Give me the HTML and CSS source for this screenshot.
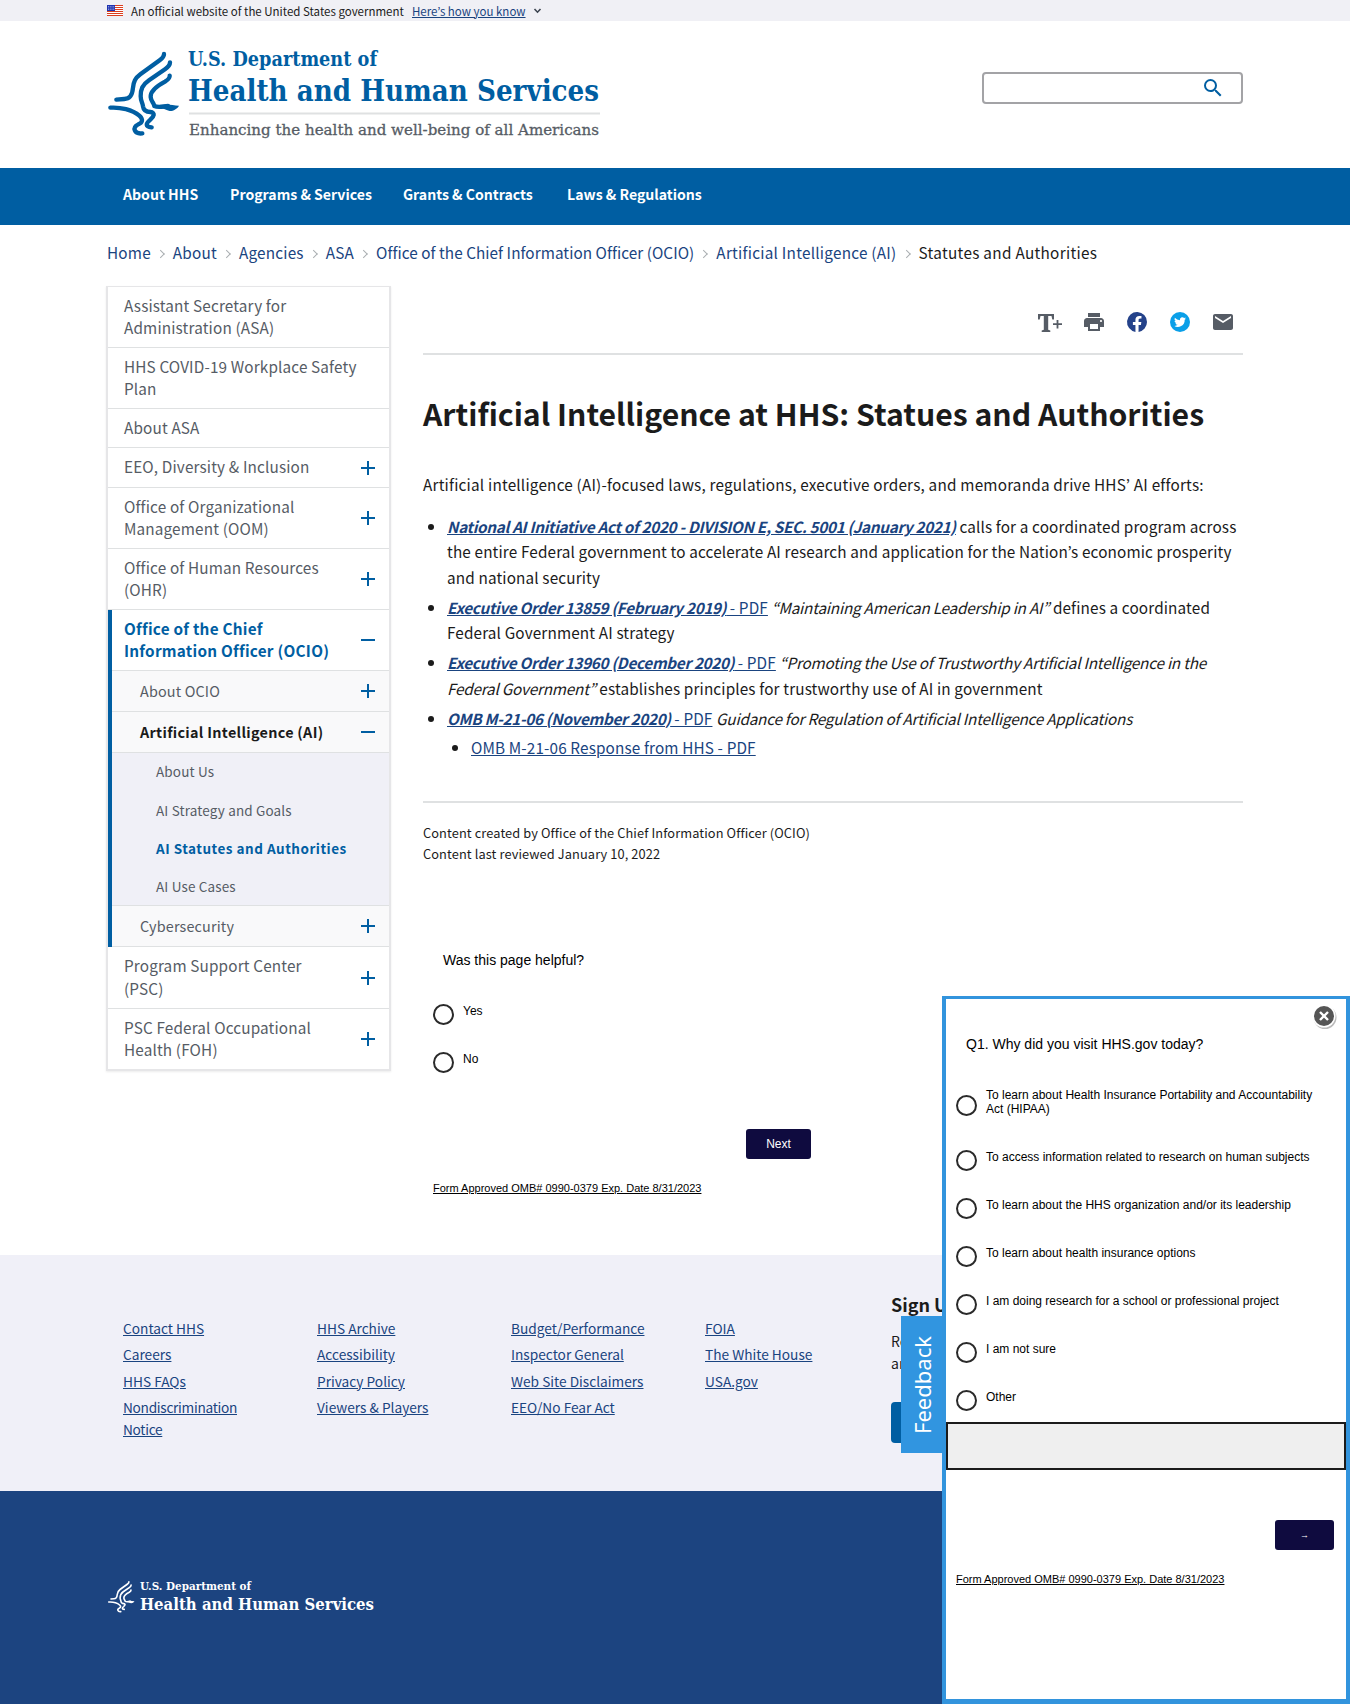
FILE: index.html
```html
<!DOCTYPE html>
<html lang="en">
<head>
<meta charset="utf-8">
<title>Artificial Intelligence at HHS: Statues and Authorities</title>
<link rel="stylesheet" href="styles.css">
</head>
<body>
<svg class="defs" width="0" height="0" aria-hidden="true">
  <symbol id="eagle" viewBox="20 10 216 264">
    <g fill="none" stroke="currentColor" stroke-width="13" stroke-linecap="round" stroke-linejoin="round">
      <path d="M191 25C191 32 186 38 178 44L120 86C104 98 100 108 98 126C96 150 88 160 72 160L48 162"/>
      <path d="M209 50C209 58 204 64 194 71L146 104C126 118 121 130 121 152C121 166 127 172 128 182C130 196 138 199 150 199C166 201 161 212 150 222C136 234 134 243 154 245"/>
      <path d="M208 90C209 97 204 102 194 108C164 124 150 138 151 154C152 168 160 170 162 181C176 188 190 181 203 181"/>
      <path d="M30 186C60 184 96 192 117 210C130 222 126 231 114 236C94 246 102 266 126 263"/>
    </g>
    <path fill="currentColor" d="M184 179C200 173 214 178 236 180C230 190 218 197 208 196C198 194 192 190 184 188Z"/>
  </symbol>
  <symbol id="plus" viewBox="0 0 14 14"><path d="M0 7H14M7 0V14" stroke="#005ea2" stroke-width="2"/></symbol>
  <symbol id="minus" viewBox="0 0 14 14"><path d="M0 7H14" stroke="#005ea2" stroke-width="2"/></symbol>
</svg>

<div class="banner">
  <svg class="flag" viewBox="0 0 16 11"><rect width="16" height="11" fill="#fff"/><path d="M0 .5H16M0 2.5H16M0 4.5H16M0 6.5H16M0 8.5H16M0 10.5H16" stroke="#db3e1f"/><rect width="8" height="6" fill="#1e33b1"/><path d="M1 1.5H8M1 3H8M1 4.5H8" stroke="#fff" stroke-width=".6" stroke-dasharray=".8 1"/></svg>
  <span class="banner-text">An official website of the United States government</span>
  <a class="banner-link" href="#">Here’s how you know</a>
  <svg class="chev" viewBox="0 0 8 6"><path d="M1 1L4 4.2L7 1" fill="none" stroke="#3d4551" stroke-width="1.6"/></svg>
</div>

<header class="header">
  <svg class="logo" viewBox="0 0 494 94">
    <use href="#eagle" x="0" y="4" width="72" height="88" color="#005ea2"/>
    <g class="logo-serif" fill="#005ea2">
      <text x="81" y="20.7" font-size="19.5" textLength="189" lengthAdjust="spacingAndGlyphs">U.S. Department of</text>
      <text x="81" y="56.3" font-size="30" textLength="411" lengthAdjust="spacingAndGlyphs">Health and Human Services</text>
    </g>
    <path d="M82 68.5H493" stroke="#dfe1e2" stroke-width="2"/>
    <text class="logo-tag" x="82" y="90" font-size="15.3" textLength="410" lengthAdjust="spacingAndGlyphs" fill="#565c65">Enhancing the health and well-being of all Americans</text>
  </svg>
  <div class="search">
    <svg viewBox="0 0 24 24" width="24" height="24"><path fill="#005ea2" d="M15.5 14h-.79l-.28-.27A6.47 6.47 0 0 0 16 9.5 6.5 6.5 0 1 0 9.5 16c1.61 0 3.09-.59 4.23-1.57l.27.28v.79l5 4.99L20.49 19l-4.99-5zm-6 0a4.5 4.5 0 1 1 0-9 4.5 4.5 0 0 1 0 9z"/></svg>
  </div>
</header>

<nav class="nav">
  <a class="n1">About HHS</a><a class="n2">Programs &amp; Services</a><a class="n3">Grants &amp; Contracts</a><a class="n4">Laws &amp; Regulations</a>
</nav>

<div class="crumbs">
  <a>Home</a><i></i><a>About</a><i></i><a>Agencies</a><i></i><a>ASA</a><i></i><a class="tight">Office of the Chief Information Officer (OCIO)</a><i></i><a class="loose">Artificial Intelligence (AI)</a><i></i><span>Statutes and Authorities</span>
</div>

<div class="page">
  <aside class="side">
    <div class="item">Assistant Secretary for<br>Administration (ASA)</div>
    <div class="item">HHS COVID-19 Workplace Safety<br>Plan</div>
    <div class="item">About ASA</div>
    <div class="item">EEO, Diversity &amp; Inclusion<svg><use href="#plus"/></svg></div>
    <div class="item">Office of Organizational<br>Management (OOM)<svg><use href="#plus"/></svg></div>
    <div class="item">Office of Human Resources<br>(OHR)<svg><use href="#plus"/></svg></div>
    <div class="group">
      <div class="item current">Office of the Chief<br>Information Officer (OCIO)<svg><use href="#minus"/></svg></div>
      <div class="item sub">About OCIO<svg><use href="#plus"/></svg></div>
      <div class="item sub open">Artificial Intelligence (AI)<svg><use href="#minus"/></svg></div>
      <div class="leafs">
        <div>About Us</div>
        <div>AI Strategy and Goals</div>
        <div class="active">AI Statutes and Authorities</div>
        <div>AI Use Cases</div>
      </div>
      <div class="item sub">Cybersecurity<svg><use href="#plus"/></svg></div>
    </div>
    <div class="item">Program Support Center<br>(PSC)<svg><use href="#plus"/></svg></div>
    <div class="item">PSC Federal Occupational<br>Health (FOH)<svg><use href="#plus"/></svg></div>
  </aside>

  <main class="main">
    <div class="share">
      <svg viewBox="0 0 26 24" class="tplus"><path fill="#565c65" d="M1 4H17V9.500H15.300L14.500 6H11.200V19.800L13.300 20.500V22H4.700V20.500L6.800 19.800V6H3.500L2.700 9.500H1ZM19.600 10H21.400V13.300H25V15H21.400V18.500H19.600V15H16V13.300H19.600Z"/></svg>
      <svg viewBox="0 0 24 24"><path fill="#565c65" d="M19 8H5c-1.660 0-3 1.340-3 3v6h4v4h12v-4h4v-6c0-1.660-1.340-3-3-3zm-3 11H8v-5h8v5zm3-7c-.55 0-1-.45-1-1s.45-1 1-1 1 .45 1 1-.45 1-1 1zm-1-9H6v4h12V3z"/></svg>
      <svg viewBox="0 0 24 24"><path fill="#24428a" d="M22 12a10 10 0 1 0-11.560 9.880v-6.990H7.900V12h2.540V9.800c0-2.510 1.490-3.890 3.780-3.890 1.090 0 2.240.2 2.240.2v2.460h-1.260c-1.240 0-1.630.77-1.630 1.560V12h2.780l-.45 2.890h-2.330v6.990A10 10 0 0 0 22 12z"/></svg>
      <svg viewBox="0 0 24 24"><circle cx="12" cy="12" r="10" fill="#0a9fe8"/><path fill="#fff" d="M18 8.400c-.45.200-.9.330-1.400.390.500-.3.900-.78 1.070-1.350-.48.280-1 .480-1.550.600a2.450 2.450 0 0 0-4.200 2.230 6.950 6.950 0 0 1-5.040-2.560 2.450 2.450 0 0 0 .76 3.270c-.4 0-.78-.12-1.110-.3v.03c0 1.190.84 2.180 1.960 2.400-.36.100-.74.120-1.100.040a2.450 2.450 0 0 0 2.280 1.700A4.900 4.900 0 0 1 6 15.870a6.930 6.930 0 0 0 10.680-6.170A4.900 4.900 0 0 0 18 8.400z"/></svg>
      <svg viewBox="0 0 24 24"><path fill="#565c65" d="M20 4H4c-1.100 0-2 .9-2 2v12c0 1.100.9 2 2 2h16c1.100 0 2-.9 2-2V6c0-1.100-.9-2-2-2zm0 4l-8 5-8-5V6l8 5 8-5v2z"/></svg>
    </div>
    <h1>Artificial Intelligence at HHS: Statues and Authorities</h1>
    <p class="intro">Artificial intelligence (AI)-focused laws, regulations, executive orders, and memoranda drive HHS’ AI efforts:</p>
    <ul class="list">
      <li><a><b>National AI Initiative Act of 2020 - DIVISION E, SEC. 5001 (January 2021)</b></a> calls for a coordinated program across<br>the entire Federal government to accelerate AI research and application for the Nation’s economic prosperity<br>and national security</li>
      <li><a><b>Executive Order 13859 (February 2019)</b> - PDF</a> <em>“Maintaining American Leadership in AI”</em> defines a coordinated<br>Federal Government AI strategy</li>
      <li><a><b>Executive Order 13960 (December 2020)</b> - PDF</a> <em>“Promoting the Use of Trustworthy Artificial Intelligence in the<br>Federal Government”</em> establishes principles for trustworthy use of AI in government</li>
      <li><a><b>OMB M-21-06 (November 2020)</b> - PDF</a> <em>Guidance for Regulation of Artificial Intelligence Applications</em>
        <ul><li><a>OMB M-21-06 Response from HHS - PDF</a></li></ul>
      </li>
    </ul>
    <div class="meta">Content created by Office of the Chief Information Officer (OCIO)<br>Content last reviewed January 10, 2022</div>
    <form class="survey">
      <p class="q">Was this page helpful?</p>
      <label class="opt"><span class="radio"></span>Yes</label>
      <label class="opt"><span class="radio"></span>No</label>
      <button class="btn next" type="button">Next</button>
      <a class="omb">Form Approved OMB# 0990-0379 Exp. Date 8/31/2023</a>
    </form>
  </main>
</div>

<footer>
  <div class="links">
    <div class="col"><a>Contact HHS</a><a>Careers</a><a>HHS FAQs</a><a class="snug">Nondiscrimination<br>Notice</a></div>
    <div class="col"><a>HHS Archive</a><a>Accessibility</a><a>Privacy Policy</a><a>Viewers &amp; Players</a></div>
    <div class="col"><a>Budget/Performance</a><a>Inspector General</a><a>Web Site Disclaimers</a><a>EEO/No Fear Act</a></div>
    <div class="col"><a>FOIA</a><a>The White House</a><a>USA.gov</a></div>
    <div class="signup"><h2>Sign Up</h2><p>Receive<br>and</p><span class="signbtn"></span></div>
  </div>
  <div class="bottom">
    <svg class="flogo" viewBox="0 0 270 36" color="#fff">
      <use href="#eagle" x="0" y="2" width="28" height="33"/>
      <g class="logo-serif" fill="#fff">
        <text x="33" y="11.700" font-size="11.2" textLength="111" lengthAdjust="spacingAndGlyphs">U.S. Department of</text>
        <text x="33" y="32.300" font-size="16.800" textLength="234" lengthAdjust="spacingAndGlyphs">Health and Human Services</text>
      </g>
    </svg>
  </div>
</footer>

<div class="tab"><span>Feedback</span></div>
<div class="modal">
  <svg class="close" viewBox="0 0 26 26"><circle cx="14" cy="14.500" r="11.500" fill="#bbb"/><circle cx="13" cy="13" r="11.500" fill="#fff"/><circle cx="13" cy="13" r="10" fill="#555"/><path d="M9 9L17 17M17 9L9 17" stroke="#fff" stroke-width="2.400"/></svg>
  <p class="q">Q1. Why did you visit HHS.gov today?</p>
  <label class="opt tall"><span class="radio"></span>To learn about Health Insurance Portability and Accountability<br>Act (HIPAA)</label>
  <label class="opt"><span class="radio"></span>To access information related to research on human subjects</label>
  <label class="opt"><span class="radio"></span>To learn about the HHS organization and/or its leadership</label>
  <label class="opt"><span class="radio"></span>To learn about health insurance options</label>
  <label class="opt"><span class="radio"></span>I am doing research for a school or professional project</label>
  <label class="opt"><span class="radio"></span>I am not sure</label>
  <label class="opt last"><span class="radio"></span>Other</label>
  <div class="other"></div>
  <button class="btn arrow" type="button">→</button>
  <a class="omb">Form Approved OMB# 0990-0379 Exp. Date 8/31/2023</a>
</div>
</body>
</html>
```
FILE: styles.css
```css
* { box-sizing: border-box; }
body {
  margin: 0;
  width: 1350px;
  height: 1704px;
  position: relative;
  overflow: hidden;
  background: #fff;
  color: #1b1b1b;
  font-family: "Noto Sans CJK KR", sans-serif;
  font-size: 15.3px;
  white-space: nowrap;
}
.defs { position: absolute; }
p, h1, h2, ul { margin: 0; padding: 0; }

.banner {
  height: 21px;
  background: #f0f0f5;
  padding-left: 107px;
  display: flex;
  align-items: center;
  font-size: 11.5px;
  line-height: 22px;
}
.flag { width: 16px; height: 11px; margin-right: 8px; }
.banner-text { width: 281px; }
.banner-link { color: #1a4480; text-decoration: underline; margin-right: 5px; width: 116px; }
.chev { width: 9px; height: 6px; }

.header { height: 147px; padding: 24px 107px 0; display: flex; justify-content: space-between; }
.logo { width: 494px; height: 94px; overflow: visible; }
.logo-serif { font-family: "DejaVu Serif", serif; font-weight: bold; }
.logo-tag { font-family: "DejaVu Serif", serif; stroke: #565c65; stroke-width: .3px; }
.search {
  width: 261px;
  height: 32px;
  margin-top: 27px;
  border: 2px solid #a3a3a6;
  border-radius: 4px;
  padding: 2px 16px 0 0;
  display: flex;
  justify-content: flex-end;
}

.nav {
  height: 57px;
  background: #005ea2;
  color: #fff;
  font-weight: bold;
  font-size: 14.1px;
  line-height: 52px;
  padding-left: 123px;
  display: flex;
}
.n1 { width: 107px; }
.n2 { width: 173px; }
.n3 { width: 164px; }

.crumbs { height: 61px; padding: 15px 0 0 107px; line-height: 24px; display: flex; align-items: flex-start; letter-spacing: .2px; }
.crumbs a { color: #1a4480; }
.crumbs .tight { letter-spacing: .05px; }
.crumbs .loose { letter-spacing: .25px; }
.crumbs span { letter-spacing: .3px; }
.crumbs i { width: 22px; height: 27px; display: flex; align-items: center; justify-content: center; }
.crumbs i::before {
  content: "";
  width: 5px;
  height: 5px;
  border: solid #a9aeb1;
  border-width: 1.5px 1.5px 0 0;
  transform: rotate(45deg) translate(-1px, 1px);
}

.page { display: flex; height: 969px; padding-left: 106px; gap: 32px; align-items: flex-start; }
.side {
  width: 285px;
  border: 2px solid #e6e6e8;
  border-top-width: 1px;
  color: #565c65;
  line-height: 22.1px;
  letter-spacing: .15px;
  box-shadow: 0 1px 2px rgba(0, 0, 0, .08);
}
.item { position: relative; padding: 7px 0 9px 16px; border-bottom: 1px solid #dfe1e2; }
.side > .item:last-child { border-bottom: 0; }
.item svg { position: absolute; width: 14px; height: 14px; right: 14px; top: calc(50% - 7px); }
.group { border-left: 4px solid #005ea2; }
.group .item { padding-left: 12px; }
.group .sub { padding: 9px 0 9px 28px; font-size: 14.400px; background: #f9f9fa; }
.item.current { font-weight: bold; color: #005ea2; letter-spacing: .25px; }
.group .open { font-weight: bold; color: #1b1b1b; letter-spacing: .3px; }
.leafs { background: #f0f0f7; padding-left: 44px; height: 154px; line-height: 38.300px; font-size: 13.500px; border-bottom: 1px solid #dfe1e2; }
.leafs div { margin-top: -1px; margin-bottom: 1px; }
.leafs .active { font-weight: bold; color: #005ea2; letter-spacing: .5px; }

.main { width: 820px; }
.share { height: 69px; border-bottom: 2px solid #dfe1e2; padding: 24px 8px 0; display: flex; justify-content: flex-end; gap: 19px; }
.share svg { width: 24px; height: 24px; }
.share .tplus { width: 26px; height: 24px; }
h1 { font-size: 30.2px; line-height: 44px; margin-top: 36px; font-weight: bold; }
.intro { line-height: 26px; margin-top: 36px; letter-spacing: .2px; }
.list { padding-left: 24px; margin-top: 17px; line-height: 25.440px; letter-spacing: .14px; }
.list li { margin-bottom: 4.500px; }
.list a { color: #1a4480; text-decoration: underline; }
.list b { font-style: italic; letter-spacing: -.32px; }
.list em { letter-spacing: -.22px; }
.list ul { padding-left: 24px; margin-top: 4px; list-style: disc; }
.meta { border-top: 2px solid #dfe1e2; margin-top: 41px; padding-top: 19px; height: 127px; font-size: 12.800px; line-height: 21px; letter-spacing: .1px; }

.q { font: 14px/20px "Liberation Sans", sans-serif; color: #000; }
.opt { display: flex; font: 12px/14px "Liberation Sans", sans-serif; color: #000; height: 48px; }
.radio { width: 21px; height: 21px; border: 2px solid #2a2a2a; border-radius: 50%; margin: 0 9px 0 0; flex: none; }
.btn { border: 0; border-radius: 3px; background: #0f0b3f; color: #fff; font: 12px "Liberation Sans", sans-serif; height: 30px; padding: 0; }
.omb { font: 11px/14px "Liberation Sans", sans-serif; color: #000; text-decoration: underline; display: block; }
.survey { padding: 22px 0 0 10px; }
.survey .q { padding-left: 10px; margin-bottom: 34px; }
.next { width: 65px; display: block; margin: 29px 0 22px 313px; }

.links { height: 236px; background: #f0f0f8; display: flex; padding: 62px 0 0 123px; font-size: 13.700px; line-height: 22px; }
.col { width: 194px; color: #1a4480; }
.col a { display: block; text-decoration: underline; margin-bottom: 4.300px; }
.col .snug { letter-spacing: -.3px; }
.signup { margin: -26px 0 0 -8px; font-size: 14px; }
.signup h2 { font-size: 18px; line-height: 26px; margin-bottom: 13px; }
.signbtn { display: block; width: 60px; height: 41px; background: #005ea2; border-radius: 4px; margin-top: 28px; }
.bottom { height: 213px; background: #1c4480; padding: 87px 0 0 107px; }
.flogo { width: 270px; height: 36px; display: block; overflow: visible; }

.tab { position: absolute; left: 901px; top: 1316px; width: 42px; height: 137px; background: #3195e0; color: #fff; display: flex; align-items: center; justify-content: center; }
.tab span { writing-mode: vertical-rl; transform: rotate(180deg); font: 22px/30px "Noto Sans", sans-serif; }
.modal { position: absolute; left: 942px; top: 996px; width: 408px; height: 708px; background: #fff; border: 4px solid #3294dd; border-top-width: 3px; border-bottom-width: 5px; }
.close { position: absolute; right: 9px; top: 4px; width: 26px; height: 26px; }
.modal .q { padding: 35px 0 0 20px; margin-bottom: 34px; }
.modal .opt { padding-left: 10px; }
.modal .tall { height: 62px; }
.modal .tall .radio { margin-top: 7px; }
.modal .last { height: 32px; }
.other { height: 48px; border: 2px solid #1b1b1b; background: #efefef; }
.arrow { display: block; width: 59px; margin: 50px 0 22px 329px; font-size: 9px; }
.modal .omb { margin-left: 10px; }
```
